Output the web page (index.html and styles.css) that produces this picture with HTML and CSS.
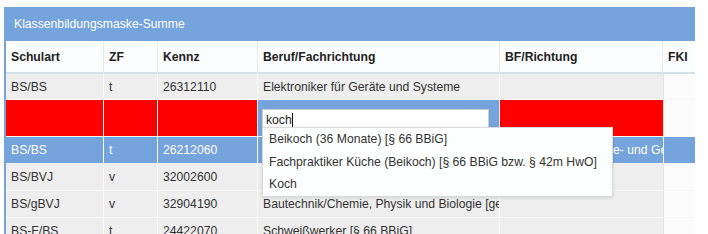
FILE: index.html
```html
<!DOCTYPE html>
<html lang="de">
<head>
<meta charset="utf-8">
<title>Klassenbildungsmaske-Summe</title>
<link rel="stylesheet" href="styles.css">
</head>
<body>
<div class="panel">
  <div class="panel-title">Klassenbildungsmaske-Summe</div>
  <table class="grid">
    <colgroup>
      <col class="c-schulart"><col class="c-zf"><col class="c-kennz"><col class="c-beruf"><col class="c-bf"><col class="c-fki">
    </colgroup>
    <thead>
      <tr>
        <th>Schulart</th><th>ZF</th><th>Kennz</th><th>Beruf/Fachrichtung</th><th>BF/Richtung</th><th>FKI</th>
      </tr>
    </thead>
    <tbody>
      <tr class="row">
        <td>BS/BS</td><td>t</td><td>26312110</td><td>Elektroniker für Geräte und Systeme</td><td></td><td class="fki"></td>
      </tr>
      <tr class="row edit">
        <td class="err"></td><td class="err"></td><td class="err"></td>
        <td class="editor">
          <div class="input">koch<span class="caret"></span>
            <ul class="suggest">
              <li>Beikoch (36 Monate) [§ 66 BBiG]</li>
              <li>Fachpraktiker Küche (Beikoch) [§ 66 BBiG bzw. § 42m HwO]</li>
              <li>Koch</li>
            </ul>
          </div>
        </td>
        <td class="err"></td><td class="fki"></td>
      </tr>
      <tr class="row selected">
        <td>BS/BS</td><td>t</td><td>26212060</td><td></td><td class="bf-shift"><span>e- und Ge</span></td><td class="fki"></td>
      </tr>
      <tr class="row">
        <td>BS/BVJ</td><td>v</td><td>32002600</td><td></td><td></td><td class="fki"></td>
      </tr>
      <tr class="row">
        <td>BS/gBVJ</td><td>v</td><td>32904190</td><td>Bautechnik/Chemie, Physik und Biologie [gewerblich]</td><td></td><td class="fki"></td>
      </tr>
      <tr class="row">
        <td>BS-F/BS</td><td>t</td><td>24422070</td><td>Schweißwerker [§ 66 BBiG]</td><td></td><td class="fki"></td>
      </tr>
    </tbody>
  </table>
</div>
</body>
</html>
```
FILE: styles.css
```css
html, body {
  margin: 0;
  padding: 0;
  background: #ffffff;
}
body {
  font-family: "Liberation Sans", Arial, sans-serif;
  font-size: 12.2px;
  color: #333333;
}
.panel {
  margin: 7px 0 0 4px;
  width: 689px;
  height: 227px;
  border-left: 2px solid #75a3dc;
  overflow: hidden;
  position: relative;
}
.panel-title {
  height: 34px;
  line-height: 34px;
  background: #75a3dc;
  color: #ffffff;
  padding-left: 8px;
}
.grid {
  table-layout: fixed;
  border-collapse: separate;
  border-spacing: 0;
  width: 717px;
}
.c-schulart { width: 98px; }
.c-zf { width: 54px; }
.c-kennz { width: 100px; }
.c-beruf { width: 242px; }
.c-bf { width: 163px; }
.c-fki { width: 60px; }
.grid th {
  height: 31px;
  padding: 0 5px;
  text-align: left;
  font-weight: bold;
  color: #222222;
  background: #fcfdfe;
  border-right: 1px solid #e8eaec;
  border-bottom: 2px solid #d5e0ea;
  white-space: nowrap;
  overflow: hidden;
}
.grid td {
  height: 26px;
  padding: 0 5px;
  background: #eeeeee;
  border-right: 1px solid #f8f8f8;
  border-bottom: 1px solid #f8f8f8;
  white-space: nowrap;
  overflow: hidden;
  text-overflow: clip;
}
.grid tbody tr:first-child td { height: 25px; }
.grid td.fki {
  background: #fcfcfc;
  border-left: 1px solid #e4e4e4;
}
.grid td:nth-child(5) { border-right: 0; }
.grid tr.edit td { height: 28px; }
.grid td.err { background: #ff0000; }
.grid td.editor {
  background: #75a3dc;
  padding: 5px 10px 3px 4px;
  overflow: visible;
}
.grid tr.selected td {
  background: #75a3dc;
  color: #ffffff;
  border-bottom-color: #eeeeee;
}
.grid tr.selected td.fki { background: #75a3dc; border-left-color: #f0f4fa; }
.grid td.bf-shift { padding-left: 113px; }
.input {
  position: relative;
  height: 20px;
  line-height: 20px;
  background: #ffffff;
  border: 1px solid #c9ced4;
  box-sizing: border-box;
  padding-left: 3px;
  color: #222222;
  overflow: visible;
}
.caret {
  display: inline-block;
  width: 1px;
  height: 14px;
  background: #111111;
  vertical-align: -3px;
}
.suggest {
  position: absolute;
  top: 17px;
  left: -1px;
  width: 351px;
  box-sizing: border-box;
  margin: 0;
  padding: 0;
  list-style: none;
  background: #fdfefe;
  border: 1px solid #d9dcdf;
  box-shadow: 0 1px 3px rgba(0, 0, 0, 0.12);
  z-index: 5;
}
.suggest li {
  height: 22.5px;
  line-height: 22.5px;
  padding-left: 6px;
  color: #333333;
  white-space: nowrap;
}
```
